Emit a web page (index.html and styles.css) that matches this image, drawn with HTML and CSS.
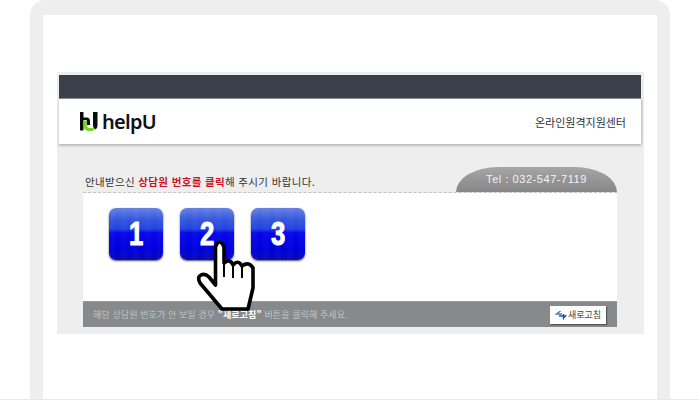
FILE: index.html
```html
<!DOCTYPE html>
<html lang="ko">
<head>
<meta charset="utf-8">
<title>helpU</title>
<link rel="stylesheet" href="styles.css">
</head>
<body>
<div class="device">
  <div class="screen">
    <div class="panel">
      <div class="topbar"></div>
      <header class="header">
        <div class="logo">
          <svg class="logo-mark" width="18" height="19" viewBox="0 0 18 19">
            <path d="M0 0h3.500v18.500H0zM3.500 5.500h3c2.500 0 3.500 1.500 3.500 3.500v4H7V9.500C7 8.500 6.500 8 5.500 8h-2z" fill="#0c0c0c"/>
            <path d="M3.500 8.500H7v4.500c0 2 1 3 2.500 3h1.500c1.200 0 2-.5 2.500-1.500h2.300C15.500 17.500 13.500 19 11 19H9c-3.500 0-5.500-2.500-5.500-5.500z" fill="#79d42a"/>
            <path d="M13 0H17.500v13c0 2-.7 3.500-2 4.500L13.500 15c-.3-.6-.5-1-.5-2z" fill="#0c0c0c"/>
          </svg>
          <span class="logo-text">helpU</span>
        </div>
        <span class="center-name">온라인원격지원센터</span>
      </header>
      <div class="notice-row">
        <p class="notice">안내받으신 <strong>상담원 번호를 클릭</strong>해 주시기 바랍니다.</p>
        <div class="tel">Tel : 032-547-7119</div>
      </div>
      <main class="card">
        <div class="numbers">
          <div class="num"><span class="digit">1</span></div>
          <div class="num"><span class="digit">2</span></div>
          <div class="num"><span class="digit">3</span></div>
        </div>
        <svg class="hand" width="64" height="78" viewBox="195 237 64 78">
          <path d="M215.500 247Q219.500 237 224 247L224 263Q230 258 233 265Q238 259 242 266Q249 261 253 268L253 288L248 309L222 309L200 283Q197 277 201 275Q205 273 209 277L215.500 285Z" fill="#fff" stroke="#000" stroke-width="3.600" stroke-linejoin="round"/>
          <path d="M224 263V277M233 265V278M242 266V278" fill="none" stroke="#000" stroke-width="2"/>
        </svg>
        <div class="footer-bar">
          <span class="hint">해당 상담원 번호가 안 보일 경우 <b>"새로고침"</b> 버튼을 클릭해 주세요.</span>
          <div class="refresh">
            <svg width="12" height="10" viewBox="0 0 12 10">
              <path d="M5.500 1L1.500 4H7" fill="none" stroke="#3b82d0" stroke-width="1.500"/>
              <path d="M4 6H10.500L8.500 8M8.500 4V9.500" fill="none" stroke="#1f4f9f" stroke-width="1.400"/>
            </svg>
            <span>새로고침</span>
          </div>
        </div>
      </main>
    </div>
  </div>
</div>
</body>
</html>
```
FILE: styles.css
```css
* { box-sizing: border-box; }
html, body { margin: 0; padding: 0; }
body {
  width: 699px;
  height: 400px;
  overflow: hidden;
  background: #fff;
  font-family: "Noto Sans CJK KR", "Noto Sans", sans-serif;
  border-bottom: 1px solid #e8e8e8;
}
.device {
  width: 640px;
  height: 399px;
  margin-left: 30px;
  padding: 15px 13px 0;
  background: #eee;
  border-radius: 15px 15px 0 0;
}
.screen {
  height: 100%;
  padding: 57px 13px 0 14px;
  background: #fff;
}
.panel {
  width: 587px;
  height: 262px;
  padding-top: 3px;
  background: #eeeeee;
}
.topbar {
  height: 24px;
  margin: 0 3px 0 2px;
  background: #3a3f49;
  border-bottom: 1px solid #6b6f75;
}
.header {
  height: 45px;
  margin: 0 3px 0 2px;
  padding: 0 15px 0 21px;
  display: flex;
  align-items: center;
  justify-content: space-between;
  background: #fff;
  box-shadow: 0 2px 2px #bdbdbd, 1px 0 2px #bdbdbd;
}
.logo { display: flex; align-items: center; gap: 4px; }
.logo-mark { display: block; }
.logo-text {
  font: 600 20px/24px "Noto Sans", sans-serif;
  letter-spacing: -.7px;
  color: #111;
}
.center-name { font-size: 11px; line-height: 14px; color: #333; }
.notice-row {
  height: 49px;
  margin: 0 27px 0 26px;
  display: flex;
  align-items: flex-end;
  justify-content: space-between;
  border-bottom: 1px dashed #c4c4c4;
}
.notice {
  margin: 0 0 3px 2px;
  font-size: 10.500px;
  line-height: 14px;
  letter-spacing: .35px;
  color: #333;
}
.notice strong { color: #cc1122; font-weight: 700; }
.tel {
  width: 161px;
  height: 25px;
  padding-top: 3px;
  text-align: center;
  font: 11px/18px "Liberation Sans", sans-serif;
  letter-spacing: .55px;
  color: #f4f4f4;
  background: linear-gradient(#a6a6a6, #868686);
  border-radius: 42px 42px 0 0 / 25px 25px 0 0;
}
.card {
  position: relative;
  height: 134px;
  margin: 0 27px 0 26px;
  padding-top: 15px;
  display: flex;
  flex-direction: column;
  justify-content: space-between;
  background: #fff;
}
.numbers { display: flex; gap: 17px; padding-left: 26px; }
.num {
  width: 54px;
  height: 52px;
  display: flex;
  align-items: center;
  justify-content: center;
  color: #fff;
  border-radius: 7px;
  background:
    repeating-linear-gradient(90deg, rgba(255,255,255,.02) 0 6px, rgba(0,0,0,.012) 6px 12px),
    linear-gradient(#6a82e6 0, #3558de 22%, #2444e2 40%, #0606ee 48%, #0000dc 80%, #0a0ab8 100%);
  box-shadow: 0 1px 2px #555;
}
.digit {
  display: block;
  transform: scaleX(.78);
  font: 700 33px/36px "Liberation Sans", sans-serif;
  -webkit-text-stroke: 1px #fff;
}
.hand { position: absolute; left: 112px; top: 44px; z-index: 2; }
.footer-bar {
  height: 26px;
  padding: 0 11px 0 10px;
  display: flex;
  align-items: center;
  justify-content: space-between;
  background: #868a8d;
  border-top: 1px solid #9a9a9a;
}
.hint { font-size: 9px; line-height: 12px; letter-spacing: .1px; color: #c0c3c5; }
.hint b { color: #fff; }
.refresh {
  width: 56px;
  height: 18px;
  padding-left: 5px;
  display: flex;
  align-items: center;
  gap: 1px;
  font-size: 9px;
  color: #444;
  background: #fff;
  box-shadow: 1px 1px 1px #555;
}
```
